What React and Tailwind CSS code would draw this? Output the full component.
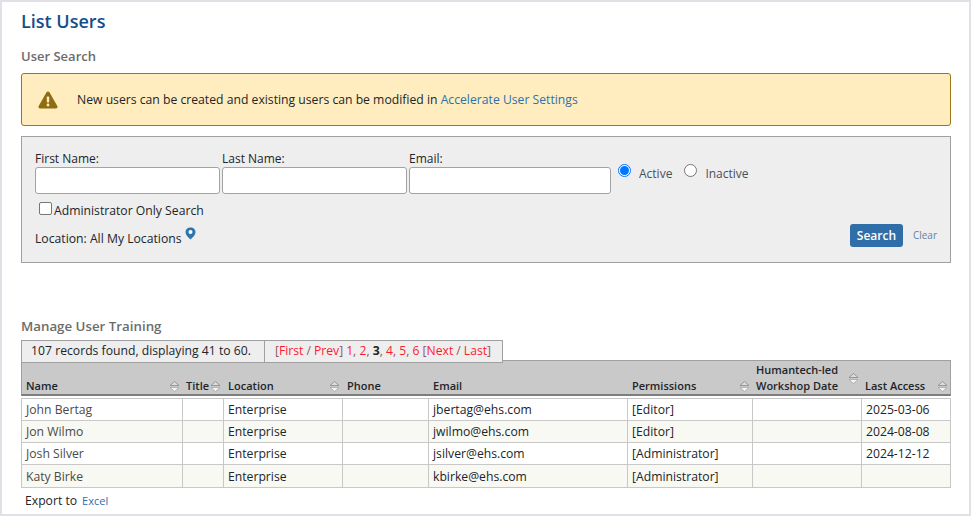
const FUENTE = { fontFamily: '"Open Sans", sans-serif' };

const COLUMNAS = [
  { titulo: "Name", ancho: "w-[162px] pl-[4px]", orden: true },
  { titulo: "Title", ancho: "w-[41px] pl-[3px]", orden: true },
  { titulo: "Location", ancho: "w-[119px] pl-[4px]", orden: true },
  { titulo: "Phone", ancho: "w-[86px] pl-[4px]" },
  { titulo: "Email", ancho: "w-[199px] pl-[4px]" },
  { titulo: "Permissions", ancho: "w-[125px] pl-[4px]", orden: true },
  { titulo: "Humantech-led Workshop Date", ancho: "w-[109px] pl-[3px]", orden: true, flechaArriba: true },
  { titulo: "Last Access", ancho: "w-[89px] pl-[3px]", orden: true },
];

const USUARIOS = [
  ["John Bertag", "", "Enterprise", "", "jbertag@ehs.com", "[Editor]", "", "2025-03-06"],
  ["Jon Wilmo", "", "Enterprise", "", "jwilmo@ehs.com", "[Editor]", "", "2024-08-08"],
  ["Josh Silver", "", "Enterprise", "", "jsilver@ehs.com", "[Administrator]", "", "2024-12-12"],
  ["Katy Birke", "", "Enterprise", "", "kbirke@ehs.com", "[Administrator]", "", ""],
];

function FlechasOrden({ className = "" }) {
  return (
    <svg width="11" height="11" viewBox="0 0 11 11" className={className}>
      <path d="M5.500 0.500 L10 4.500 H1 Z" fill="#dcdcdc" stroke="#7f7f7f" strokeWidth="0.7" />
      <path d="M1 6.500 H10 L5.500 10.500 Z" fill="#f4f4f4" stroke="#a0a0a0" strokeWidth="0.7" />
    </svg>
  );
}

function Campo({ etiqueta, ancho }) {
  return (
    <label className={`flex flex-col ${ancho}`}>
      <span className="text-[12px] leading-[16px] text-[#212529]">{etiqueta}</span>
      <input
        type="text"
        className="h-[27px] w-full rounded-[3px] border border-[#a3a3a3] bg-white"
      />
    </label>
  );
}

function Radio({ etiqueta, activo }) {
  return (
    <span className="flex items-start gap-[8px]">
      <span
        className={`flex h-[13px] w-[13px] items-center justify-center rounded-full border bg-white ${
          activo ? "border-[#0075ff]" : "border-[#767676]"
        }`}
      >
        {activo && <span className="h-[9px] w-[9px] rounded-full bg-[#0075ff]" />}
      </span>
      <span className="mt-[2px] text-[12px] leading-[16px] text-[#495057]">{etiqueta}</span>
    </span>
  );
}

export default function App() {
  return (
    <div
      style={FUENTE}
      className="h-[516px] w-[971px] overflow-hidden border-2 border-[#e0e0e6] bg-white pl-[19px] pr-[18px]"
    >
      <h1 className="pt-[7px] text-[18px] font-semibold leading-[24px] text-[#134e8b]">List Users</h1>
      <h2 className="mt-[14px] text-[13px] font-semibold leading-[18px] text-[#6c6c6c]">User Search</h2>

      <div className="mt-[8px] flex h-[53px] items-center rounded-[3px] border border-[#9c7614] bg-[#ffedbf] pl-[16px] text-[12.200px] text-[#212529]">
        <svg width="20" height="18" viewBox="0 0 20 18" className="mr-[19px]">
          <path
            d="M10 0.600c.7 0 1.200.4 1.600 1l7.700 13.400c.7 1.200-.1 2.600-1.500 2.600H2.200C.8 17.600 0 16.200.7 15L8.400 1.600c.4-.6.9-1 1.600-1z"
            fill="#8f6b12"
          />
          <rect x="8.800" y="5.500" width="2.400" height="6" rx="0.800" fill="#ffedbf" />
          <circle cx="10" cy="14" r="1.400" fill="#ffedbf" />
        </svg>
        <span className="mt-[2px]">
          New users can be created and existing users can be modified in{" "}
          <a className="text-[#2f6fad]">Accelerate User Settings</a>
        </span>
      </div>

      <div className="mt-[10px] h-[127px] border border-[#a0a0a0] bg-[#eeeeee] px-[13px] pt-[14px]">
        <div className="flex items-start">
          <Campo etiqueta="First Name:" ancho="w-[185px]" />
          <div className="w-[2px]" />
          <Campo etiqueta="Last Name:" ancho="w-[185px]" />
          <div className="w-[2px]" />
          <Campo etiqueta="Email:" ancho="w-[202px]" />
          <div className="ml-[7px] mt-[13px] flex gap-[12px]">
            <Radio etiqueta="Active" activo />
            <Radio etiqueta="Inactive" />
          </div>
        </div>
        <label className="ml-[4px] mt-[8px] flex h-[18px] items-center text-[12.200px] text-[#212529]">
          <span className="-mt-[5px] mr-[2px] h-[13px] w-[13px] rounded-[2px] border border-[#767676] bg-white" />
          Administrator Only Search
        </label>
        <div className="mt-[6px] flex items-start justify-between">
          <div className="flex items-start pt-[5px] text-[12.200px] leading-[16px] text-[#212529]">
            Location: All My Locations
            <svg width="11" height="13" viewBox="0 0 11 13" className="ml-[3px] -mt-[4px]">
              <path
                d="M5.500 0.500C2.500 0.500 .5 2.500 .5 5c0 3 3 5.500 5 7.500 2-2 5-4.500 5-7.500 0-2.500-2-4.500-5-4.500z"
                fill="#2f75ad"
              />
              <circle cx="5.500" cy="5" r="2" fill="#ffffff" />
            </svg>
          </div>
          <div className="-mt-[2px] flex items-center gap-[10px]">
            <button className="h-[23px] w-[53px] rounded-[3px] bg-[#2f6ea9] text-[12px] font-semibold text-white">
              Search
            </button>
            <a className="text-[10px] text-[#64829f]">Clear</a>
          </div>
        </div>
      </div>

      <h2 className="mt-[54px] text-[13.300px] font-semibold leading-[18px] text-[#6c6c6c]">Manage User Training</h2>

      <div className="relative z-10 -mb-[3px] mt-[5px] flex h-[23px] w-fit items-center border border-[#a0a0a0] bg-[#eeeeee] text-[12.200px]">
        <span className="flex h-full w-[243px] items-center justify-center border-r border-[#a0a0a0] pr-[4px] text-[#212529]">
          107 records found, displaying 41 to 60.
        </span>
        <span className="flex h-full w-[237px] items-center justify-center pr-[1px] text-[#ff1a2e]">
          <span className="text-[#8b5a5a]">[</span>First <span className="mx-[3px] text-[#8b5a5a]">/</span> Prev
          <span className="text-[#8b5a5a]">]</span>
          <span className="ml-[3px]">1</span>
          <span className="text-[#8b5a5a]">,&nbsp;</span>2<span className="text-[#8b5a5a]">,&nbsp;</span>
          <b className="text-[#212529]">3</b>
          <span className="text-[#8b5a5a]">,&nbsp;</span>4<span className="text-[#8b5a5a]">,&nbsp;</span>5
          <span className="text-[#8b5a5a]">,&nbsp;</span>6
          <span className="ml-[3px] text-[#8b5a5a]">[</span>Next <span className="mx-[3px] text-[#8b5a5a]">/</span> Last
          <span className="text-[#8b5a5a]">]</span>
        </span>
      </div>

      <table className="w-[930px] table-fixed border-separate border-spacing-0 text-[12.200px]">
        <thead>
          <tr className="h-[36px] bg-[#c9c9c9]">
            {COLUMNAS.map((col, j) => (
              <th
                key={col.titulo}
                className={`${col.ancho} border-b-2 border-t border-[#a0a0a0] border-b-[#7d7d7d] text-left align-bottom text-[11px] font-semibold leading-[16px] text-[#212529] ${
                  j === 0 ? "border-l" : ""
                } ${j === 7 ? "border-r pr-[2px]" : "pr-[3px]"}`}
              >
                <span className="flex items-end justify-between">
                  <span className={col.flechaArriba ? "w-[90px]" : ""}>{col.titulo}</span>
                  {col.orden && <FlechasOrden className={col.flechaArriba ? "mb-[10px]" : "mb-[2px]"} />}
                </span>
              </th>
            ))}
          </tr>
          <tr className="h-[2px]">
            <td colSpan={8} />
          </tr>
        </thead>
        <tbody>
          {USUARIOS.map((fila, i) => (
            <tr
              key={fila[0]}
              className={`${i === 0 || i === 3 ? "h-[23px]" : "h-[22px]"} ${i % 2 ? "bg-[#f8f9f3]" : "bg-white"}`}
            >
              {fila.map((valor, j) => (
                <td
                  key={j}
                  className={`border-b border-r border-[#c8c8c8] px-[4px] leading-[15px] ${
                    i === 0 ? "border-t" : ""
                  } ${j === 0 ? "border-l text-[#4a4a4a]" : "text-[#212529]"}`}
                >
                  {valor}
                </td>
              ))}
            </tr>
          ))}
        </tbody>
      </table>

      <div className="ml-[4px] mt-[5px] flex items-center gap-[5px] text-[12.200px] leading-[16px] text-[#212529]">
        Export to <a className="text-[11px] text-[#2f6fad]">Excel</a>
      </div>
    </div>
  );
}
